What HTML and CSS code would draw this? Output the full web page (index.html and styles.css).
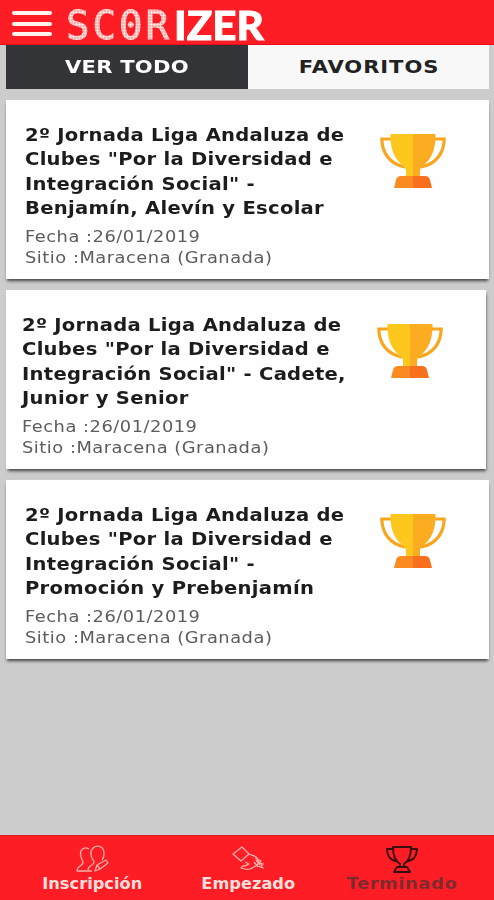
FILE: index.html
```html
<!DOCTYPE html>
<html lang="es">
<head>
    <meta charset="UTF-8">
    <meta name="viewport" content="width=device-width, initial-scale=1.0">
    <title>Scorizer</title>
    <link rel="stylesheet" href="styles.css">
</head>
<body>
    <svg width="0" height="0" class="defs">
        <symbol id="cup" viewBox="0 0 66 56">
            <path d="M12 6H1.800C2 19 9 31 25 34M54 6h10.200C64 19 57 31 41 34" fill="none" stroke="#f9a61f" stroke-width="3.200"/>
            <path d="M10.500 1H33v43h-7v-6c0-3-2-5-5-7C14 25 10 15 10.500 1z" fill="#fdc71e"/>
            <path d="M33 1h22.500C56 15 52 25 45 31c-3 2-5 4-5 7v6h-7z" fill="#fbac20"/>
            <path d="M14 55l2-8q1-4 5-4h12v12z" fill="#fb8a20"/>
            <path d="M33 43h12q4 0 5 4l2 8H33z" fill="#f8701d"/>
        </symbol>
    </svg>

    <header class="header">
        <button class="menu" aria-label="Menú"><span></span><span></span><span></span></button>
        <div class="logo"><span class="logo-dots">SC0R</span><span class="logo-bold">IZER</span></div>
    </header>

    <nav class="tabs">
        <a class="tab active"><span>VER TODO</span></a>
        <a class="tab"><span>FAVORITOS</span></a>
    </nav>

    <main class="list">
        <article class="card">
            <div class="card-text">
                <h2>2º Jornada Liga Andaluza de<br>Clubes "Por la Diversidad e<br>Integración Social" -<br>Benjamín, Alevín y Escolar</h2>
                <p>Fecha :26/01/2019</p>
                <p>Sitio :Maracena (Granada)</p>
            </div>
            <svg class="cup"><use href="#cup"/></svg>
        </article>
        <article class="card pressed">
            <div class="card-text">
                <h2>2º Jornada Liga Andaluza de<br>Clubes "Por la Diversidad e<br>Integración Social" - Cadete,<br>Junior y Senior</h2>
                <p>Fecha :26/01/2019</p>
                <p>Sitio :Maracena (Granada)</p>
            </div>
            <svg class="cup"><use href="#cup"/></svg>
        </article>
        <article class="card">
            <div class="card-text">
                <h2>2º Jornada Liga Andaluza de<br>Clubes "Por la Diversidad e<br>Integración Social" -<br>Promoción y Prebenjamín</h2>
                <p>Fecha :26/01/2019</p>
                <p>Sitio :Maracena (Granada)</p>
            </div>
            <svg class="cup"><use href="#cup"/></svg>
        </article>
    </main>

    <footer class="footer">
        <a class="foot-item">
            <svg viewBox="0 0 34 28">
                <path d="M14 4C9 1 4 5 6 12c1 3 2 4 2 6-1 3-6 3-6 8h15M13 25c0-5 6-4 6-8 0-2-3-3-3-8-1-10 14-11 13 0 0 3-1 4-2 6M20 26l2-6 9-5 2 3-8 6zM22 20l3 4"/>
            </svg>
            <span>Inscripción</span>
        </a>
        <a class="foot-item">
            <svg viewBox="0 0 34 28">
                <path d="M3 9L12 2l7 7-8 7zM19 9c3 2 6 1 8 4l2 5c-3 3-6 5-9 6-3 1-6 0-9-1l2-2c3 0 4-1 6-2l-4-2M25 13l6 3-2 2 4 1-2 2 2 2-5-2M26 15l4 5M24 17l4 5"/>
            </svg>
            <span>Empezado</span>
        </a>
        <a class="foot-item active">
            <svg viewBox="0 0 34 28">
                <path d="M8 2h18c0 9-2 14-7 17v3h-4v-3C10 16 8 11 8 2zM8 4H2c0 6 3 11 9 12M26 4h6c0 6-3 11-9 12M12 22h10l3 5H9z"/>
            </svg>
            <span>Terminado</span>
        </a>
    </footer>
</body>
</html>
```
FILE: styles.css
```css
* {
    box-sizing: border-box;
}
body {
    margin: 0;
    height: 900px;
    display: flex;
    flex-direction: column;
    overflow: hidden;
    background: #ccc;
    font-family: Verdana, "DejaVu Sans", sans-serif;
}
.defs {
    position: absolute;
}
.header {
    display: flex;
    align-items: center;
    height: 45px;
    padding: 3px 0 0 12px;
    background: #ff1d25;
    border-bottom: 1px solid #e90c12;
}
.menu {
    display: flex;
    flex-direction: column;
    gap: 6.500px;
    width: 40px;
    padding: 0;
    margin-right: 14px;
    border: none;
    background: none;
}
.menu span {
    height: 4px;
    border-radius: 2px;
    background: #fff3f0;
}
.logo {
    display: flex;
    align-items: center;
    height: 41px;
    line-height: 47px;
    white-space: nowrap;
}
.logo-dots {
    width: 108px;
    margin-top: 3px;
    font-family: "DejaVu Sans Mono", monospace;
    font-size: 39px;
    letter-spacing: 3px;
    color: transparent;
    -webkit-text-stroke: 1px transparent;
    background: radial-gradient(circle, #ffeae6 40%, #ff6f6d 95%) 0 0 / 3px 3px;
    -webkit-background-clip: text;
    background-clip: text;
}
.logo-bold {
    margin-top: 4px;
    font-family: Lato, sans-serif;
    font-size: 39px;
    font-weight: 900;
    color: #fff;
    -webkit-text-stroke: 0.800px #fff;
    transform: scaleX(1.080);
    transform-origin: left;
}
.tabs {
    display: flex;
    height: 44px;
    margin: 0 5px 0 6px;
}
.tab {
    flex: 1;
    display: flex;
    align-items: center;
    justify-content: center;
    padding-bottom: 2px;
    background: #f8f8f8;
    color: #222;
    font-size: 18px;
    font-weight: bold;
}
.tab span {
    letter-spacing: 0.800px;
    transform: translateX(1px) scaleX(1.170);
}
.tab.active {
    background: #333438;
    color: #fff;
}
.tab.active span {
    letter-spacing: 0.200px;
    transform: scaleX(1.170);
}
.list {
    flex: 1;
    display: flex;
    flex-direction: column;
    gap: 11px;
    padding: 11px 5px 0 6px;
}
.card {
    display: flex;
    justify-content: space-between;
    height: 179px;
    padding: 23px 43px 0 19px;
    background: #fefefe;
    box-shadow: 0 3px 3px -1px #444;
}
.card.pressed {
    margin-right: 3px;
    padding-left: 16px;
    box-shadow: 1px 3px 3px -1px #444;
}
.card-text {
    width: 280px;
    white-space: nowrap;
    transform: scaleX(1.150);
    transform-origin: left;
}
.card h2 {
    margin: 0 0 7px;
    font-size: 17px;
    line-height: 24.300px;
    letter-spacing: 0.250px;
    color: #1c1c1c;
}
.card p {
    margin: 0;
    font-size: 15.500px;
    line-height: 21px;
    letter-spacing: 0.450px;
    color: #5c5c5c;
}
.cup {
    width: 66px;
    height: 56px;
    margin-top: 10px;
}
.footer {
    display: flex;
    height: 65px;
    padding: 0 14px;
    background: #ff1d25;
    border-top: 1px solid #e01b1b;
}
.foot-item {
    flex: 1;
    display: flex;
    flex-direction: column;
    align-items: center;
    padding-top: 9px;
    color: #ffdfdc;
    font-size: 16px;
    font-weight: bold;
}
.foot-item svg {
    width: 34px;
    height: 28px;
    fill: none;
    stroke: #ffb0ac;
    stroke-width: 1.300;
    stroke-linejoin: round;
}
.foot-item span {
    line-height: 22px;
    transform: translateX(1px) scaleX(1.015);
}
.foot-item.active {
    color: #7b2a2d;
}
.foot-item.active span {
    letter-spacing: 0.500px;
    transform: scaleX(1.120);
}
.foot-item.active svg {
    stroke: #3a0d10;
    stroke-width: 2;
}
```
